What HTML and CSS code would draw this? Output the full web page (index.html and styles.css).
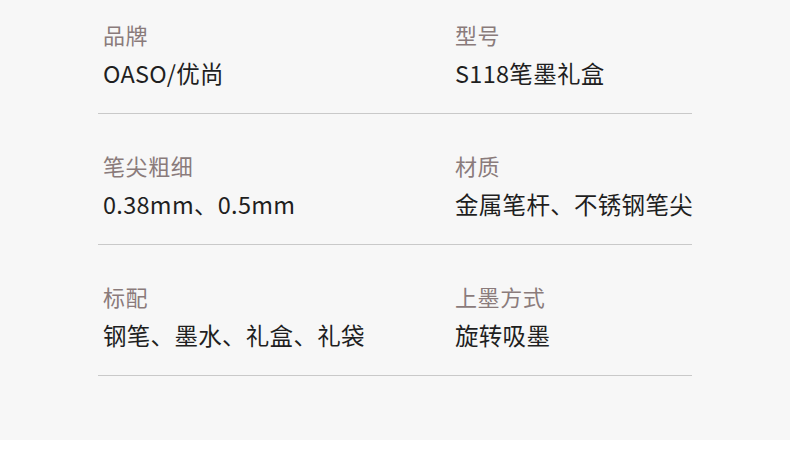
FILE: index.html
```html
<!DOCTYPE html>
<html lang="zh-CN">
<head>
<meta charset="utf-8">
<link rel="stylesheet" href="styles.css">
</head>
<body>
<div class="panel">
  <div class="specs">
    <div class="row">
      <div class="cell"><div class="label">品牌</div><div class="value">OASO/优尚</div></div>
      <div class="cell"><div class="label">型号</div><div class="value">S118笔墨礼盒</div></div>
    </div>
    <div class="row">
      <div class="cell"><div class="label">笔尖粗细</div><div class="value">0.38mm、0.5mm</div></div>
      <div class="cell"><div class="label">材质</div><div class="value">金属笔杆、不锈钢笔尖</div></div>
    </div>
    <div class="row">
      <div class="cell"><div class="label">标配</div><div class="value">钢笔、墨水、礼盒、礼袋</div></div>
      <div class="cell"><div class="label">上墨方式</div><div class="value">旋转吸墨</div></div>
    </div>
  </div>
</div>
</body>
</html>
```
FILE: styles.css
```css
html, body {
  margin: 0;
  padding: 0;
  background: #ffffff;
}
body {
  font-family: "Noto Sans CJK SC", "Noto Sans", sans-serif;
}
.panel {
  background: #f7f7f7;
  height: 440px;
  padding-left: 98px;
  box-sizing: border-box;
}
.specs {
  width: 594px;
}
.row {
  display: grid;
  grid-template-columns: 352px 1fr;
  padding: 35px 5px 0;
  height: 131px;
  box-sizing: border-box;
  border-bottom: 1px solid #c9c9c9;
}
.row:first-child {
  height: 114px;
  padding-top: 18px;
}
.label {
  font-size: 22px;
  line-height: 32px;
  letter-spacing: 0.6px;
  color: #8a7b7b;
}
.value {
  margin-top: 7px;
  font-size: 23.5px;
  line-height: 32px;
  letter-spacing: 0.3px;
  white-space: nowrap;
  color: #1f1f1f;
}
```
